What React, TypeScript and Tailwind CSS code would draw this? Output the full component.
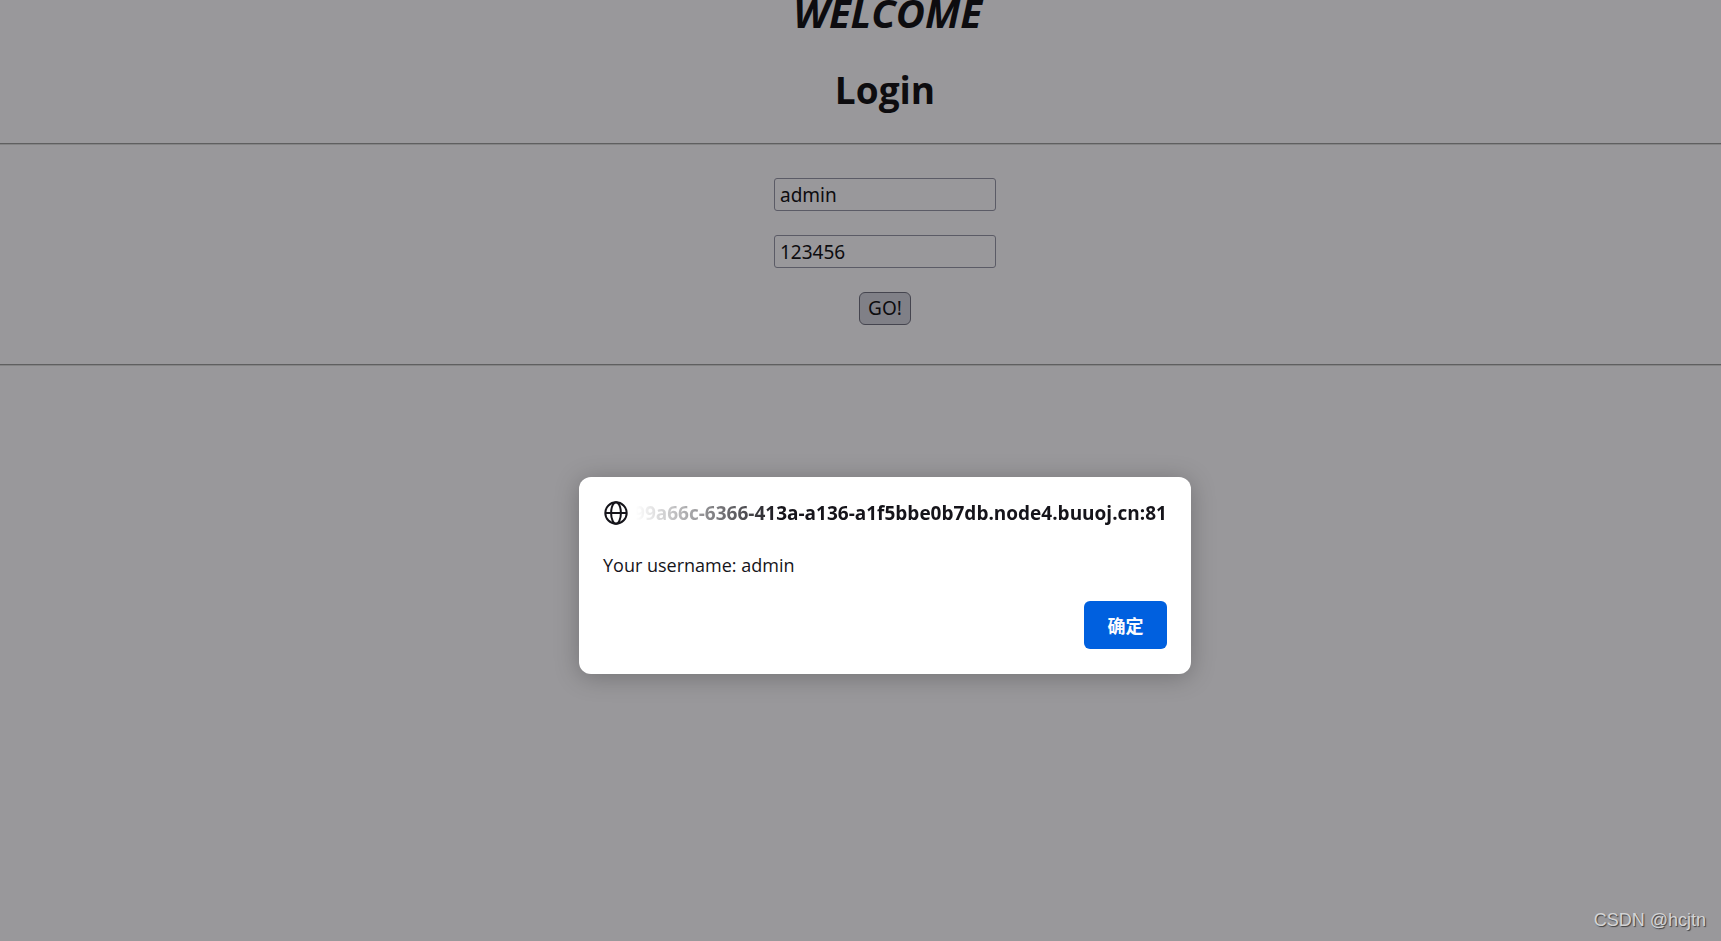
import { useState } from "react";

function GlobeIcon() {
  return (
    <svg
      viewBox="0 0 24 24"
      className="size-6 shrink-0"
      fill="none"
      stroke="#15141a"
      strokeWidth="2"
      aria-hidden="true"
    >
      <circle cx="12" cy="12" r="10.7" />
      <ellipse cx="12" cy="12" rx="4.9" ry="10.7" />
      <path d="M1.3 12h21.4" />
    </svg>
  );
}

function LoginForm() {
  const [username, setUsername] = useState("admin");
  const [password, setPassword] = useState("123456");
  const field =
    "h-[33px] w-[222px] rounded-[3px] border border-[#5b5b66] bg-[#99989b] px-[5px] font-['Noto_Sans',sans-serif] text-[19px] text-[#0d0c0f] outline-none";

  return (
    <form
      className="flex flex-col items-center gap-6 pl-[49px]"
      onSubmit={(event) => event.preventDefault()}
    >
      <input
        aria-label="Username"
        className={field}
        value={username}
        onChange={(event) => setUsername(event.target.value)}
      />
      <input
        aria-label="Password"
        className={field}
        value={password}
        onChange={(event) => setPassword(event.target.value)}
      />
      <button
        type="submit"
        className="flex h-[33px] w-[52px] items-center justify-center rounded-[6px] border border-[#45454f] bg-[#808087] font-['Noto_Sans',sans-serif] text-[19px] text-[#0d0c0f]"
      >
        GO!
      </button>
    </form>
  );
}

function AlertDialog() {
  return (
    <div
      role="alertdialog"
      aria-labelledby="alert-origin"
      aria-describedby="alert-message"
      className="flex w-[612px] flex-col rounded-xl bg-white px-6 pt-6 pb-[25px] text-[#15141a] shadow-[0_3px_24px_rgba(0,0,0,0.25)]"
    >
      <div className="flex h-6 items-center gap-2 pl-px">
        <GlobeIcon />
        <div className="flex min-w-0 flex-1 justify-end overflow-hidden [mask-image:linear-gradient(to_right,transparent,black_144px)]">
          <span
            id="alert-origin"
            className="text-[19px] leading-6 font-bold whitespace-nowrap"
          >
            99a66c-6366-413a-a136-a1f5bbe0b7db.node4.buuoj.cn:81
          </span>
        </div>
      </div>
      <p id="alert-message" className="mt-7 text-[18px] leading-6">
        Your username: admin
      </p>
      <button
        type="button"
        className="mt-6 flex h-12 w-[83px] items-center justify-center self-end rounded-[6px] bg-[#0060df] font-['Noto_Sans_CJK_SC',sans-serif] text-[18px] font-bold text-[#fbfbfe]"
      >
        确定
      </button>
    </div>
  );
}

export default function App() {
  return (
    <div className="relative flex h-screen flex-col overflow-hidden bg-[#99989b] font-['Open_Sans','Noto_Sans',sans-serif] text-[#0d0c0f]">
      <h1 className="-mt-[13px] pl-[54px] text-center text-[40px] leading-[52px] font-bold italic">
        WELCOME
      </h1>
      <h2 className="mt-[25px] pl-[49px] text-center text-[37px] leading-[52px] font-bold">
        Login
      </h2>
      <hr className="mt-[27px] mb-[33px] h-[2px] border-t border-b border-t-[#5f5f60] border-b-[#848485]" />
      <LoginForm />
      <hr className="mt-[39px] h-[2px] border-t border-b border-t-[#5f5f60] border-b-[#848485]" />
      <div className="mt-[111px] flex justify-center pl-[49px]">
        <AlertDialog />
      </div>
      <p className="absolute right-[15px] bottom-[9px] font-['Liberation_Sans',sans-serif] text-[18px] leading-6 text-[#d4d4d5] [text-shadow:1px_1px_1px_#3f3f40]">
        CSDN @hcjtn
      </p>
    </div>
  );
}
